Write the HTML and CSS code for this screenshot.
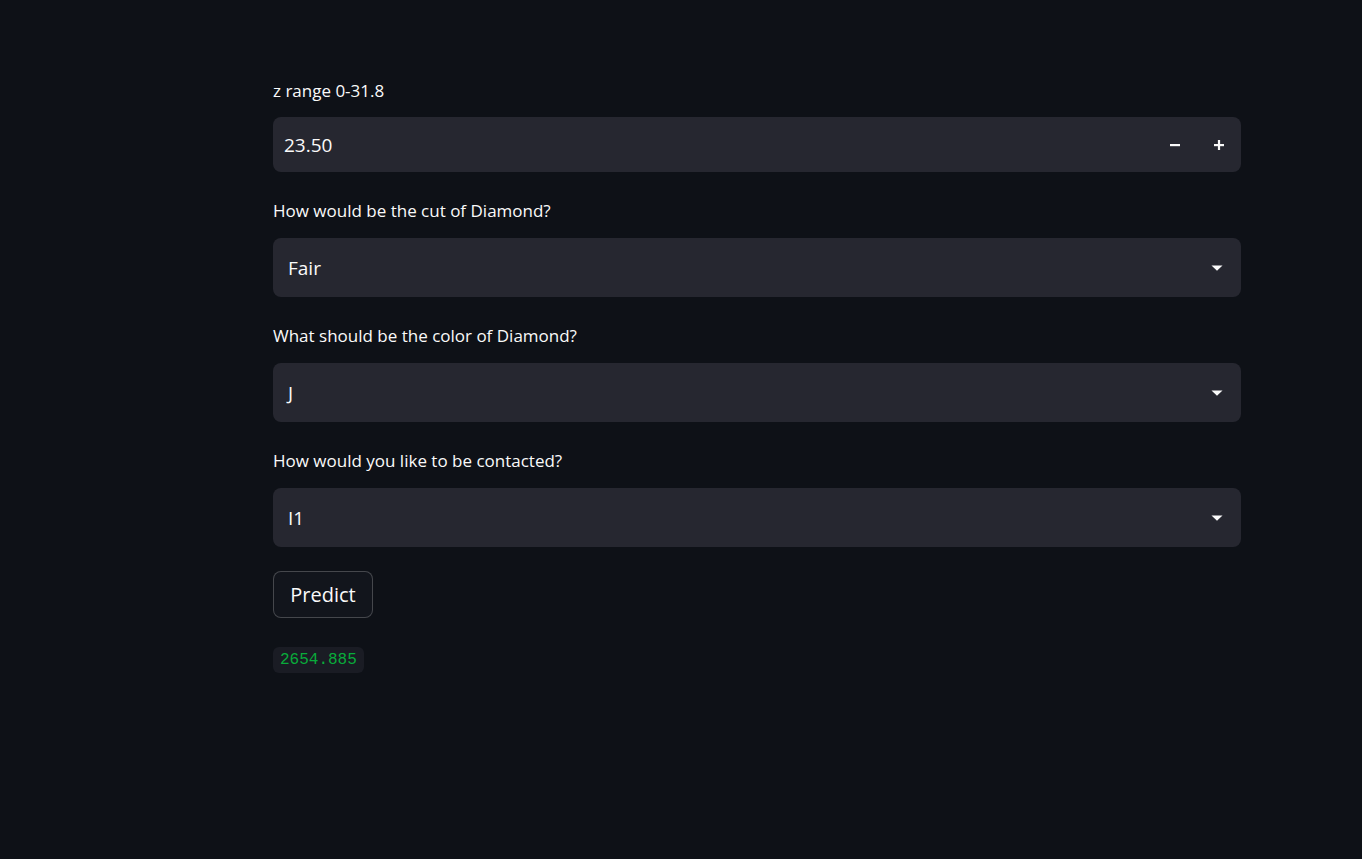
FILE: index.html
```html
<!DOCTYPE html>
<html>
<head>
<meta charset="utf-8">
<link rel="stylesheet" href="styles.css">
</head>
<body>
<main class="main">
  <div class="block">
    <div class="field">
      <label class="label">z range 0-31.8</label>
      <div class="numinput">
        <span class="value num">23.50</span>
        <div class="steps">
          <button class="step" aria-label="minus"><svg width="12" height="12" viewBox="0 0 12 12"><rect x="1" y="5" width="10" height="2.2" fill="#fafafa"/></svg></button>
          <button class="step" aria-label="plus"><svg width="12" height="12" viewBox="0 0 12 12"><rect x="1" y="5" width="10" height="2.2" fill="#fafafa"/><rect x="4.9" y="1" width="2.2" height="10" fill="#fafafa"/></svg></button>
        </div>
      </div>
    </div>
    <div class="field">
      <label class="label">How would be the cut of Diamond?</label>
      <div class="select"><span class="value">Fair</span><svg class="caret" width="12" height="6" viewBox="0 0 12 6"><path d="M0.5 0.5 L11.5 0.5 L6 5.8 Z" fill="#fafafa"/></svg></div>
    </div>
    <div class="field">
      <label class="label">What should be the color of Diamond?</label>
      <div class="select"><span class="value">J</span><svg class="caret" width="12" height="6" viewBox="0 0 12 6"><path d="M0.5 0.5 L11.5 0.5 L6 5.8 Z" fill="#fafafa"/></svg></div>
    </div>
    <div class="field">
      <label class="label">How would you like to be contacted?</label>
      <div class="select"><span class="value">I1</span><svg class="caret" width="12" height="6" viewBox="0 0 12 6"><path d="M0.5 0.5 L11.5 0.5 L6 5.8 Z" fill="#fafafa"/></svg></div>
    </div>
    <div class="actions">
      <button class="btn">Predict</button>
    </div>
    <div class="result"><code class="code">2654.885</code></div>
  </div>
</main>
</body>
</html>
```

FILE: styles.css
```css
html, body {
  margin: 0;
  padding: 0;
  background: #0e1117;
  color: #fafafa;
  font-family: "Open Sans", "Noto Sans", sans-serif;
  height: 100%;
}

.main {
  display: flex;
  justify-content: flex-start;
  padding: 0 0 0 273px;
}

.block {
  width: 968px;
  display: flex;
  flex-direction: column;
  padding-top: 79px;
}

.field {
  display: flex;
  flex-direction: column;
  gap: 14px;
  margin-bottom: 27px;
}

.label {
  font-size: 17px;
  line-height: 24px;
  height: 24px;
  color: #fafafa;
}

.numinput {
  height: 55px;
  background: #262730;
  border-radius: 8px;
  display: flex;
  align-items: center;
  justify-content: space-between;
  padding-left: 11px;
}

.value {
  font-size: 19px;
  color: #fafafa;
}

.num {
  font-size: 19px;
}

.steps {
  display: flex;
  height: 100%;
}

.step {
  width: 44px;
  height: 100%;
  background: transparent;
  border: none;
  padding: 0;
  display: flex;
  align-items: center;
  justify-content: center;
  cursor: pointer;
}

.select {
  height: 59px;
  background: #262730;
  border-radius: 8px;
  display: flex;
  align-items: center;
  justify-content: space-between;
  padding: 0 18px 0 15px;
  margin-top: 1px;
}

.caret {
  display: block;
}

.actions {
  margin-top: -3px;
  display: flex;
}

.btn {
  width: 100px;
  height: 47px;
  background: #12151c;
  border: 1px solid rgba(250, 250, 250, 0.22);
  border-radius: 8px;
  color: #fafafa;
  font-family: "Open Sans", "Noto Sans", sans-serif;
  font-size: 20px;
  padding: 0;
}

.result {
  margin-top: 29px;
  display: flex;
}

.code {
  display: inline-block;
  background: #1a1c24;
  color: #09ab3b;
  font-family: "Liberation Mono", "DejaVu Sans Mono", monospace;
  font-size: 16px;
  line-height: 26px;
  padding: 0 7px;
  border-radius: 6px;
}
```
